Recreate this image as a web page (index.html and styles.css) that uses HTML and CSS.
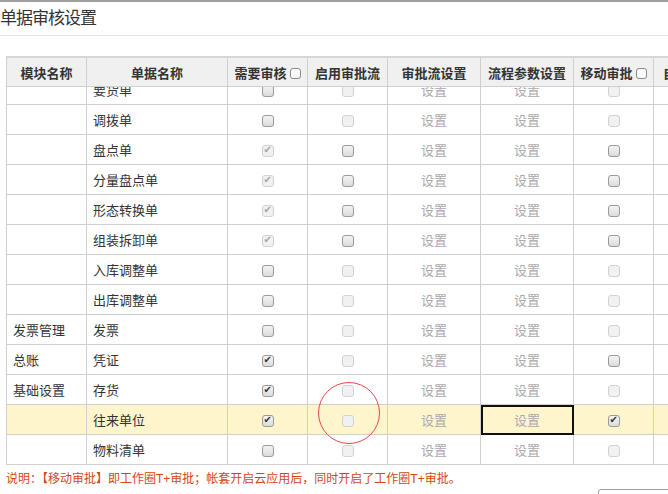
FILE: index.html
```html
<!DOCTYPE html>
<html lang="zh">
<head>
    <meta charset="UTF-8">
    <meta name="viewport" content="width=device-width, initial-scale=1.0">
    <title>单据审核设置</title>
    <link rel="stylesheet" href="styles.css">
</head>
<body>
    <div class="page">
        <h1 class="title">单据审核设置</h1>

        <div class="grid">
            <table class="grid-table grid-head">
                <colgroup>
                    <col class="c-mod"><col class="c-doc"><col class="c-chk"><col class="c-chk">
                    <col class="c-set"><col class="c-set"><col class="c-chk"><col class="c-more">
                </colgroup>
                <tr>
                    <th>模块名称</th>
                    <th>单据名称</th>
                    <th>需要审核<span class="cb cb-head"></span></th>
                    <th>启用审批流</th>
                    <th>审批流设置</th>
                    <th>流程参数设置</th>
                    <th>移动审批<span class="cb cb-head"></span></th>
                    <th class="left">自动审批</th>
                </tr>
            </table>

            <div class="grid-body">
                <table class="grid-table grid-rows">
                    <colgroup>
                        <col class="c-mod"><col class="c-doc"><col class="c-chk"><col class="c-chk">
                        <col class="c-set"><col class="c-set"><col class="c-chk"><col class="c-more">
                    </colgroup>
                    <tr>
                        <td></td><td class="name">要货单</td>
                        <td><span class="cb"></span></td>
                        <td><span class="cb off"></span></td>
                        <td class="link">设置</td><td class="link">设置</td>
                        <td><span class="cb off"></span></td><td></td>
                    </tr>
                    <tr>
                        <td></td><td class="name">调拨单</td>
                        <td><span class="cb"></span></td>
                        <td><span class="cb off"></span></td>
                        <td class="link">设置</td><td class="link">设置</td>
                        <td><span class="cb off"></span></td><td></td>
                    </tr>
                    <tr>
                        <td></td><td class="name">盘点单</td>
                        <td><span class="cb on off"></span></td>
                        <td><span class="cb"></span></td>
                        <td class="link">设置</td><td class="link">设置</td>
                        <td><span class="cb"></span></td><td></td>
                    </tr>
                    <tr>
                        <td></td><td class="name">分量盘点单</td>
                        <td><span class="cb on off"></span></td>
                        <td><span class="cb"></span></td>
                        <td class="link">设置</td><td class="link">设置</td>
                        <td><span class="cb"></span></td><td></td>
                    </tr>
                    <tr>
                        <td></td><td class="name">形态转换单</td>
                        <td><span class="cb on off"></span></td>
                        <td><span class="cb"></span></td>
                        <td class="link">设置</td><td class="link">设置</td>
                        <td><span class="cb"></span></td><td></td>
                    </tr>
                    <tr>
                        <td></td><td class="name">组装拆卸单</td>
                        <td><span class="cb on off"></span></td>
                        <td><span class="cb"></span></td>
                        <td class="link">设置</td><td class="link">设置</td>
                        <td><span class="cb"></span></td><td></td>
                    </tr>
                    <tr>
                        <td></td><td class="name">入库调整单</td>
                        <td><span class="cb"></span></td>
                        <td><span class="cb off"></span></td>
                        <td class="link">设置</td><td class="link">设置</td>
                        <td><span class="cb off"></span></td><td></td>
                    </tr>
                    <tr>
                        <td></td><td class="name">出库调整单</td>
                        <td><span class="cb"></span></td>
                        <td><span class="cb off"></span></td>
                        <td class="link">设置</td><td class="link">设置</td>
                        <td><span class="cb off"></span></td><td></td>
                    </tr>
                    <tr>
                        <td class="name">发票管理</td><td class="name">发票</td>
                        <td><span class="cb"></span></td>
                        <td><span class="cb off"></span></td>
                        <td class="link">设置</td><td class="link">设置</td>
                        <td><span class="cb off"></span></td><td></td>
                    </tr>
                    <tr>
                        <td class="name">总账</td><td class="name">凭证</td>
                        <td><span class="cb on"></span></td>
                        <td><span class="cb off"></span></td>
                        <td class="link">设置</td><td class="link">设置</td>
                        <td><span class="cb"></span></td><td></td>
                    </tr>
                    <tr>
                        <td class="name">基础设置</td><td class="name">存货</td>
                        <td><span class="cb on"></span></td>
                        <td><span class="cb off"></span></td>
                        <td class="link">设置</td><td class="link">设置</td>
                        <td><span class="cb off"></span></td><td></td>
                    </tr>
                    <tr class="current">
                        <td></td><td class="name">往来单位</td>
                        <td><span class="cb on"></span></td>
                        <td><span class="cb off"></span></td>
                        <td class="link">设置</td><td class="link focus">设置</td>
                        <td><span class="cb on"></span></td><td></td>
                    </tr>
                    <tr>
                        <td></td><td class="name">物料清单</td>
                        <td><span class="cb"></span></td>
                        <td><span class="cb off"></span></td>
                        <td class="link">设置</td><td class="link">设置</td>
                        <td><span class="cb off"></span></td><td></td>
                    </tr>
                </table>
            </div>

            <!-- 标注圈 -->
            <span class="mark"></span>
        </div>

        <p class="note">说明：【移动审批】即工作圈T+审批；帐套开启云应用后，同时开启了工作圈T+审批。</p>

        <div class="actions">
            <button class="btn">保存</button>
        </div>
    </div>
</body>
</html>
```

FILE: styles.css
```css
html, body {
    overflow: hidden;
}

body {
    margin: 0;
    font-family: 'Liberation Sans', 'Noto Sans CJK SC', sans-serif;
    font-size: 13px;
    color: #333;
    background: #fff;
    border-top: 2px solid #a0a0a0;
}

.page {
    width: 760px;
}

.title {
    margin: 0;
    height: 33px;
    line-height: 33px;
    font-size: 17px;
    font-weight: normal;
    letter-spacing: -1px;
    color: #333;
    border-bottom: 1px solid #e2e2e2;
}

.grid {
    position: relative;
    margin: 20px 0 0 6px;
    width: 740px;
}

.grid-table {
    border-collapse: collapse;
    table-layout: fixed;
    width: 748px;
}

.c-mod { width: 80px; }
.c-doc { width: 141px; }
.c-chk { width: 80px; }
.c-set { width: 93px; }
.c-more { width: 100px; }

.grid-table th,
.grid-table td {
    border: 1px solid #cfcfcf;
    padding: 0 6px;
    white-space: nowrap;
    overflow: hidden;
    text-align: center;
}

.grid-head {
    border-top: 2px solid #d6d6d6;
}

.grid-head th {
    height: 28px;
    background: #f0f0f0;
    font-weight: bold;
    color: #333;
}

.grid-head th.left {
    text-align: left;
    padding-left: 9px;
}

.grid-body {
    height: 380px;
    overflow: hidden;
}

.grid-rows {
    margin-top: -13px;
}

.grid-rows tr {
    height: 30px;
}

.grid-rows td.name {
    text-align: left;
}

.grid-rows td.link {
    color: #aaa;
}

.grid-rows tr.current td {
    background: #fef5cd;
}

.grid-rows td.focus {
    outline: 2px solid #111;
    outline-offset: -2px;
}

.cb {
    display: inline-block;
    position: relative;
    width: 10px;
    height: 10px;
    border: 1px solid #9a9a9a;
    border-radius: 3px;
    background: linear-gradient(#f4f4f4, #dcdcdc);
    vertical-align: middle;
}

.cb.off {
    border-color: #d2d2d2;
    background: #f1f1f1;
}

.cb.on::after {
    content: '✔';
    position: absolute;
    left: 1px;
    top: -2px;
    font-family: 'DejaVu Sans', sans-serif;
    font-size: 10px;
    color: #333;
}

.cb.on.off::after {
    color: #a5a5a5;
}

.cb-head {
    width: 9px;
    height: 9px;
    margin-left: 3px;
    margin-top: -2px;
    background: #fafafa;
    border-color: #8a8a8a;
}

.mark {
    position: absolute;
    left: 312px;
    top: 326px;
    width: 60px;
    height: 60px;
    border: 1px solid #e8474a;
    border-radius: 50%;
}

.note {
    margin: 0;
    padding: 5px 0 0 6px;
    font-size: 12px;
    line-height: 14px;
    color: #d64517;
}

.actions {
    display: flex;
    justify-content: flex-end;
    padding: 3px 80px 0 0;
}

.btn {
    width: 82px;
    height: 26px;
    border: 1px solid #a0a0a0;
    border-radius: 3px;
    background: #fff;
    font-size: 12px;
}
```
